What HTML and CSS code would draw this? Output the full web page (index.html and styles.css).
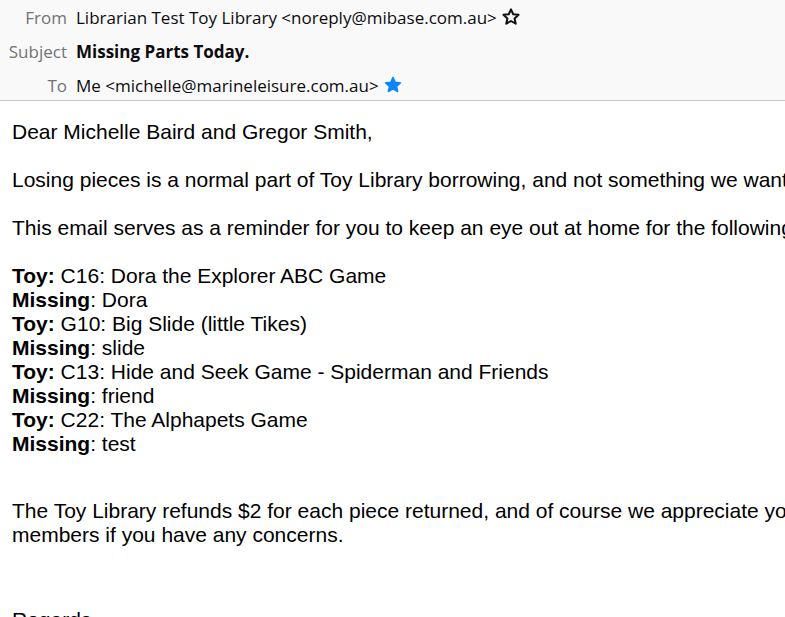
FILE: index.html
```html
<!DOCTYPE html>
<html lang="en">
<head>
    <meta charset="UTF-8">
    <title>Missing Parts Today.</title>
    <link rel="stylesheet" href="styles.css">
</head>
<body>
    <div class="header">
        <div class="row">
            <span class="label">From</span>
            <span class="value">Librarian Test Toy Library &lt;noreply@mibase.com.au&gt;</span>
            <svg class="star" width="20" height="20" viewBox="0 0 24 24">
                <path d="M12 2.8l2.7 5.9 6.4.7-4.8 4.3 1.4 6.3L12 16.8 6.3 20l1.4-6.3-4.8-4.3 6.4-.7z" fill="none" stroke="#111" stroke-width="2.4" stroke-linejoin="round"/>
            </svg>
        </div>
        <div class="row">
            <span class="label">Subject</span>
            <span class="value subject">Missing Parts Today.</span>
        </div>
        <div class="row">
            <span class="label">To</span>
            <span class="value">Me &lt;michelle@marineleisure.com.au&gt;</span>
            <svg class="star" width="20" height="20" viewBox="0 0 24 24">
                <path d="M12 2.8l2.7 5.9 6.4.7-4.8 4.3 1.4 6.3L12 16.8 6.3 20l1.4-6.3-4.8-4.3 6.4-.7z" fill="#0a84ff" stroke="#0a84ff" stroke-width="1.6" stroke-linejoin="round"/>
            </svg>
        </div>
    </div>

    <div class="message">
        <p>Dear Michelle Baird and Gregor Smith,</p>
        <p>Losing pieces is a normal part of Toy Library borrowing, and not something we want you to worry about.</p>
        <p>This email serves as a reminder for you to keep an eye out at home for the following missing pieces:</p>
        <p class="list">
            <b>Toy:</b> C16: Dora the Explorer ABC Game<br>
            <b>Missing</b>: Dora<br>
            <b>Toy:</b> G10: Big Slide (little Tikes)<br>
            <b>Missing</b>: slide<br>
            <b>Toy:</b> C13: Hide and Seek Game - Spiderman and Friends<br>
            <b>Missing</b>: friend<br>
            <b>Toy:</b> C22: The Alphapets Game<br>
            <b>Missing</b>: test
        </p>
        <p class="refund">The Toy Library refunds $2 for each piece returned, and of course we appreciate your efforts to help. Please contact one of our committee<br>members if you have any concerns.</p>
        <p class="regards">Regards,</p>
    </div>
</body>
</html>
```

FILE: styles.css
```css
body {
    margin: 0;
    overflow: hidden;
    background-color: #fff;
}
.header {
    height: 100px;
    background-color: #f9f9fa;
    border-bottom: 1px solid #c8c8c8;
    font-family: 'Open Sans', sans-serif;
    font-size: 17px;
    color: #0c0c0d;
}
.row {
    display: flex;
    align-items: center;
    height: 34px;
}
.label {
    width: 67px;
    text-align: right;
    color: #737373;
    margin-right: 9px;
}
.subject {
    font-weight: bold;
}
.star {
    margin-left: 4px;
}
.message {
    width: 1200px;
    padding: 19px 12px;
    font-family: 'Liberation Sans', Arial, sans-serif;
    font-size: 21px;
    line-height: 24px;
    color: #000;
    white-space: nowrap;
}
.message p {
    margin: 0 0 24px 0;
}
.message .list {
    margin-bottom: 43px;
}
.message .refund {
    margin-bottom: 61px;
}
```
